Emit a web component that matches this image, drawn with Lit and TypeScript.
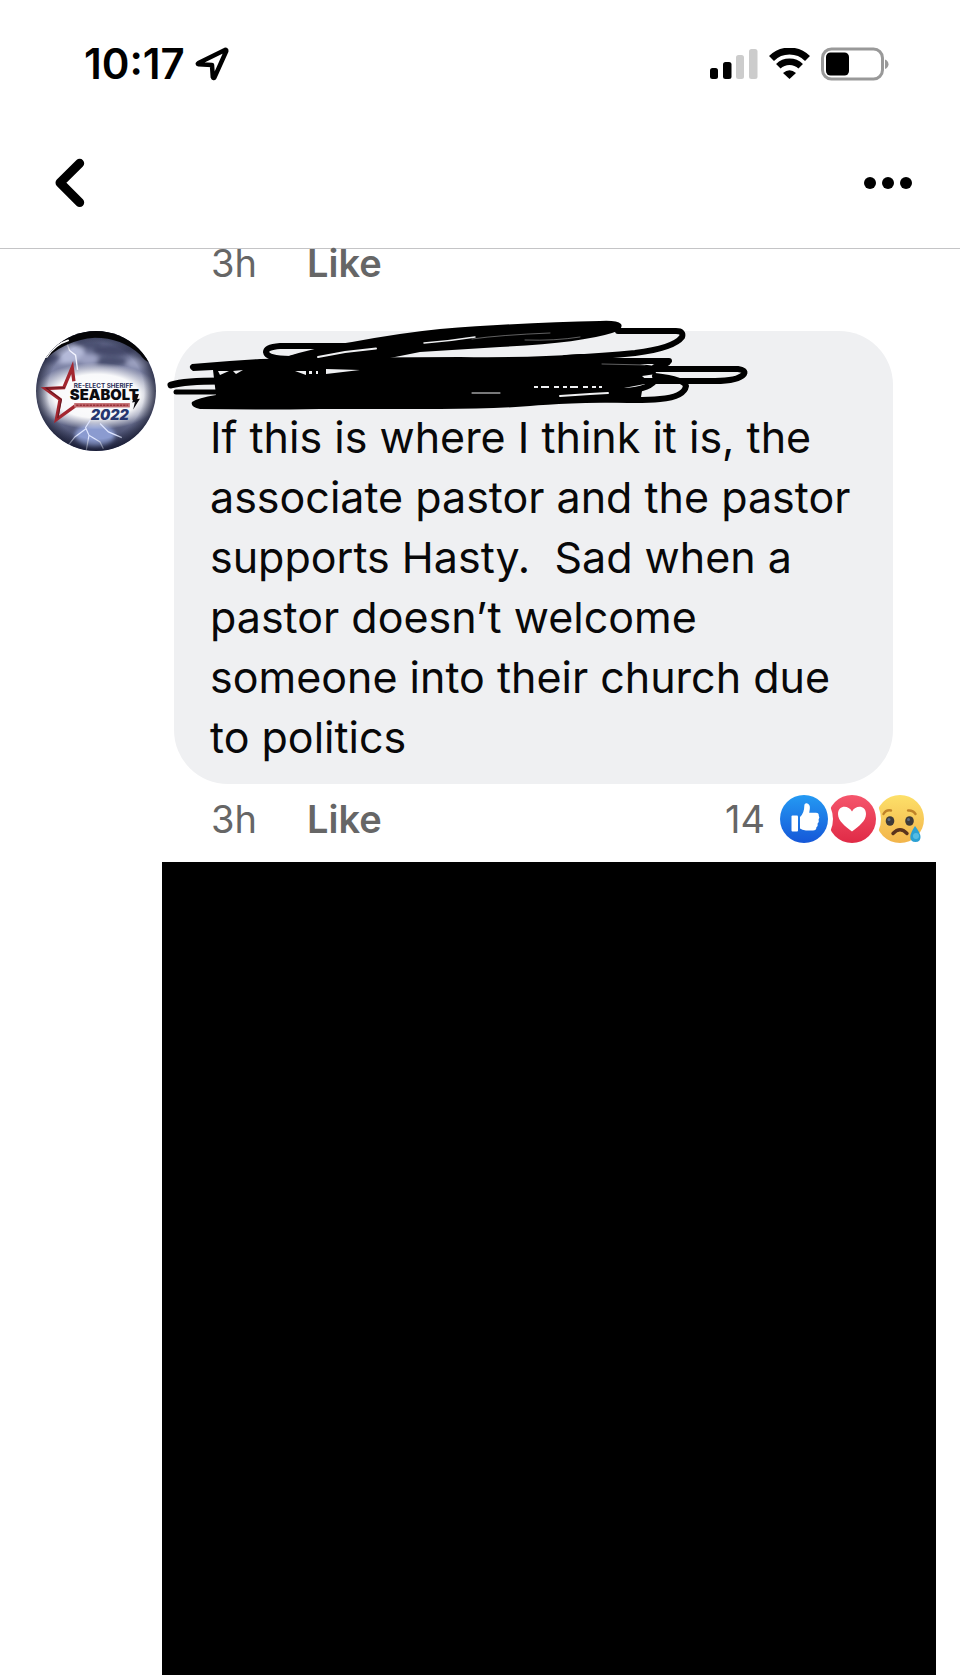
import { LitElement, html, css, svg } from "lit";
import { customElement, property } from "lit/decorators.js";

@customElement("status-bar")
class StatusBar extends LitElement {
  static styles = css`
    :host {
      display: flex;
      align-items: center;
      justify-content: space-between;
      padding: 40px 71px 30px 84px;
    }
    .clock {
      display: flex;
      align-items: center;
      gap: 10px;
      font-size: 42px;
      line-height: 48px;
      font-weight: 600;
    }
    .signals {
      display: flex;
      align-items: center;
      gap: 11px;
    }
    svg {
      display: block;
    }
  `;
  render() {
    return html`
      <div class="clock">
        <span>10:17</span>
        <svg width="34" height="34" viewBox="0 0 34 34" aria-hidden="true">
          <path d="M30 3 L3.500 16 Q2 17 3.500 17.300 L17 18 L17.800 30 Q18.500 32 19.500 30.300 L31.300 4 Q31.500 2.500 30 3Z"
            fill="none" stroke="#000" stroke-width="4.500" stroke-linejoin="round" />
        </svg>
      </div>
      <div class="signals">
        <svg width="48" height="32" viewBox="0 0 48 32" role="img" aria-label="Signal">
          <rect x="0" y="20" width="8" height="11" rx="2.5" />
          <rect x="13" y="14" width="8.5" height="17" rx="2.5" />
          <rect x="26" y="7" width="8" height="24" rx="2.5" fill="#ccc" />
          <rect x="39" y="1" width="8.5" height="30" rx="2.5" fill="#ccc" />
        </svg>
        <svg width="41" height="32" viewBox="0 0 41 32" role="img" aria-label="Wi-Fi">
          <path d="M2.5 10.5 A25.5 25.5 0 0 1 38.5 10.5" fill="none" stroke="#000" stroke-width="7" />
          <path d="M9.3 18.3 A16 16 0 0 1 31.7 18.3" fill="none" stroke="#000" stroke-width="6.4" />
          <path d="M20.5 31 L14 25 Q20.5 19.6 27 25Z" />
        </svg>
        <svg width="68" height="34" viewBox="0 0 68 34" role="img" aria-label="Battery">
          <rect x="1.5" y="2" width="60" height="30" rx="9" fill="none" stroke="#999" stroke-width="3" />
          <rect x="5" y="5.500" width="23" height="23" rx="4.500" />
          <path d="M64 12.5 Q67.5 14 67.5 17.2 Q67.5 20.5 64 22Z" fill="#999" />
        </svg>
      </div>
    `;
  }
}

@customElement("nav-bar")
class NavBar extends LitElement {
  static styles = css`
    :host {
      display: flex;
      align-items: center;
      justify-content: space-between;
      padding: 35px 43px;
      border-bottom: 1px solid #c4c4c6;
    }
    button {
      display: block;
      padding: 0;
      border: 0;
      background: none;
      cursor: pointer;
    }
    svg {
      display: block;
    }
  `;
  render() {
    return html`
      <button aria-label="Back">
        <svg width="60" height="60" viewBox="0 0 60 60">
          <path d="M36.7 10.3 L17 29.8 L36.7 49.5" fill="none" stroke="#000" stroke-width="9"
            stroke-linecap="round" stroke-linejoin="round" />
        </svg>
      </button>
      <button aria-label="More options">
        <svg width="60" height="60" viewBox="0 0 60 60">
          <circle cx="13" cy="30" r="6" /><circle cx="31" cy="30" r="6" /><circle cx="49" cy="30" r="6" />
        </svg>
      </button>
    `;
  }
}

const thumb = svg`
  <circle cx="24" cy="24" r="24" fill="url(#blue)" />
  <path d="M12.500 20.500h4.500q1 0 1 1v14q0 1-1 1h-4.500q-1 0-1-1v-14q0-1 1-1Z" fill="#fff" />
  <path d="M20 22 Q24.3 18 24.3 11 Q24.3 8 26.8 8.3 Q30.5 9.3 29.8 14 L29.2 17.8 H36 Q39 18 38.8 20.8 Q40 22.5 38.6 24.6 Q39.4 27 37.6 28.6 Q38.2 31 36.4 32.2 Q36.4 35.4 33 35.4 H26 Q22 35.4 20 33.6Z" fill="#fff" />`;
const heart = svg`
  <circle cx="24" cy="24" r="24" fill="url(#red)" />
  <circle cx="-24" cy="24" r="29" fill="#fff" />
  <path d="M24 36.500 C17 31 10 26 10 19 C10 10.500 20 9.500 24 16.500 C28 9.500 38 10.500 38 19 C38 26 31 31 24 36.500Z" fill="#fff" />`;
const sad = svg`
  <circle cx="24" cy="24" r="24" fill="url(#yellow)" />
  <circle cx="-24" cy="24" r="29" fill="#fff" />
  <path d="M7.500 19 Q10 14.500 15 15.500 M32 15.500 Q37 15 39.500 19" fill="none" stroke="#c08328" stroke-width="2.400" stroke-linecap="round" />
  <ellipse cx="14" cy="26" rx="4.300" ry="4.800" fill="#3e3a38" />
  <ellipse cx="33.500" cy="26" rx="4.300" ry="4.800" fill="#3e3a38" />
  <circle cx="13" cy="24.500" r="1.500" fill="#5d6a80" /><circle cx="32.500" cy="24.500" r="1.500" fill="#5d6a80" />
  <path d="M17 38.500 Q24 31 31 38.500" fill="none" stroke="#5a321c" stroke-width="3.400" stroke-linecap="round" />
  <path d="M39 31 Q44.500 38 44.500 42 Q44.500 47 39.500 47 Q34.300 47 34.300 42 Q34.300 38 39 31Z" fill="#2ba0d3" />
  <circle cx="40" cy="41" r="3" fill="#55bce4" />`;

@customElement("comment-actions")
class CommentActions extends LitElement {
  @property({ type: Number }) count = 0;
  static styles = css`
    :host {
      display: flex;
      align-items: center;
      justify-content: space-between;
      padding: 0 36px 0 211px;
      font-size: 38px;
      line-height: 48px;
      color: #666;
    }
    .left {
      display: flex;
      gap: 50px;
    }
    button {
      display: flex;
      align-items: center;
      gap: 15px;
      padding: 0;
      border: 0;
      background: none;
      font: inherit;
      color: inherit;
      cursor: pointer;
    }
    .like {
      font-weight: 600;
    }
    .icons {
      display: flex;
    }
    svg {
      display: block;
    }
  `;
  icon(name: string, content: unknown) {
    return html`<svg width="48" height="48" viewBox="0 0 48 48" role="img" aria-label=${name}>
      <defs>
        <linearGradient id="blue" x2="0" y2="1"><stop stop-color="#249af3" /><stop offset="1" stop-color="#1557d8" /></linearGradient>
        <linearGradient id="red" x2="0" y2="1"><stop stop-color="#f5566c" /><stop offset="1" stop-color="#e02a46" /></linearGradient>
        <linearGradient id="yellow" x2="0" y2="1"><stop stop-color="#fde069" /><stop offset="1" stop-color="#f2b44b" /></linearGradient>
      </defs>
      ${content}
    </svg>`;
  }
  render() {
    return html`
      <div class="left"><span>3h</span><button class="like">Like</button></div>
      ${this.count
        ? html`<button>
            <span>${this.count}</span>
            <span class="icons">${this.icon("Like", thumb)}${this.icon("Love", heart)}${this.icon("Sad", sad)}</span>
          </button>`
        : ""}
    `;
  }
}

@customElement("campaign-avatar")
class CampaignAvatar extends LitElement {
  static styles = css`
    :host,
    svg {
      display: block;
    }
    text {
      font-family: Inter, "Liberation Sans", sans-serif;
    }
    .small {
      font-size: 19px;
      font-weight: 700;
      fill: #2b2f58;
    }
    .name {
      font-size: 44px;
      font-weight: 900;
      fill: #0b0b10;
    }
    .year {
      font-size: 43px;
      font-weight: 900;
      font-style: italic;
      fill: #26366f;
    }
  `;
  render() {
    return html`<svg width="120" height="120" viewBox="34 34 358 358" role="img" aria-label="Profile picture">
      <defs>
        <clipPath id="disc"><circle cx="213" cy="213" r="179" /></clipPath>
        <linearGradient id="sky" x2="0" y2="1">
          <stop stop-color="#4a5072" /><stop offset=".3" stop-color="#7c82a4" />
          <stop offset=".7" stop-color="#767c9c" /><stop offset="1" stop-color="#252a4c" />
        </linearGradient>
        <radialGradient id="glow">
          <stop stop-color="#fff" /><stop offset=".65" stop-color="#fff" stop-opacity=".95" />
          <stop offset="1" stop-color="#fff" stop-opacity="0" />
        </radialGradient>
        <radialGradient id="edge">
          <stop offset=".8" stop-color="#15182c" stop-opacity="0" /><stop offset="1" stop-color="#15182c" stop-opacity=".7" />
        </radialGradient>
        <filter id="soft"><feGaussianBlur stdDeviation="7" /></filter>
      </defs>
      <g clip-path="url(#disc)">
        <rect x="34" y="34" width="358" height="358" fill="url(#sky)" />
        <g filter="url(#soft)">
          <ellipse cx="120" cy="100" rx="60" ry="32" fill="#b4b9d8" />
          <ellipse cx="80" cy="115" rx="28" ry="14" fill="#5c6288" />
          <ellipse cx="190" cy="74" rx="40" ry="10" fill="#4a4f70" />
          <ellipse cx="265" cy="92" rx="62" ry="16" fill="#454a6a" />
          <ellipse cx="255" cy="125" rx="50" ry="14" fill="#4a4f70" />
          <ellipse cx="190" cy="118" rx="30" ry="16" fill="#9ca1c2" />
          <ellipse cx="340" cy="130" rx="36" ry="16" fill="#9a9fbe" />
          <ellipse cx="210" cy="345" rx="60" ry="35" fill="#8b9bd0" />
        </g>
        <ellipse cx="215" cy="228" rx="196" ry="100" fill="url(#glow)" />
        <path d="M125 68 L134 92 L152 106 L158 150" fill="none" stroke="#f4f5ff" stroke-width="4" />
        <path d="M196 300 L182 322 L192 345 L184 390 M184 325 L150 350 L130 375 M192 345 L225 365 L235 385 M225 310 L250 335 L290 352" fill="none" stroke="#dfe6ff" stroke-width="3.500" />
        <circle cx="213" cy="213" r="179" fill="url(#edge)" />
        <path d="M48 132 Q95 30 213 30 Q335 30 380 132 Q355 122 345 105 Q290 54 210 54 Q115 60 48 132Z" fill="#050507" />
        <path d="M66 112 Q90 74 130 62" fill="none" stroke="#fff" stroke-width="5" stroke-linecap="round" />
      </g>
      <path d="M147 184 L142 143 L117 203 L62 206 L106 238 L95 298 L150 258" fill="none" stroke="#a3262f" stroke-width="10" />
      <path d="M120 203 L64 204 L110 239 L99 294" fill="none" stroke="#641720" stroke-width="3" />
      <text class="small" x="147" y="203">RE-ELECT SHERIFF</text>
      <text class="name" x="135" y="241">SEABOLT</text>
      <path d="M329 222 L341 222 L336 237 L344 236 L324 268 L329 246 L321 247Z" fill="#0b0b10" />
      <rect x="148" y="249" width="166" height="13" fill="#c26c70" />
      <path d="M154 255.500H308" stroke="#973038" stroke-width="5" stroke-dasharray="7 3" />
      <text class="year" x="197" y="300">2022</text>
    </svg>`;
  }
}

@customElement("comment-card")
class CommentCard extends LitElement {
  static styles = css`
    :host {
      display: flex;
      align-items: flex-start;
      gap: 18px;
      padding: 0 67px 0 36px;
    }
    campaign-avatar {
      flex: none;
    }
    .bubble {
      flex: 1;
      min-width: 0;
      position: relative;
      padding: 76px 30px 17px 36px;
      border-radius: 54px;
      background: #eff0f2;
      font-size: 43px;
      line-height: 60px;
      color: #080809;
    }
    p {
      margin: 0;
      white-space: pre-wrap;
    }
    .scribble {
      position: absolute;
      left: -14px;
      top: -21px;
    }
  `;
  render() {
    return html`
      <campaign-avatar></campaign-avatar>
      <div class="bubble">
        <svg class="scribble" width="620" height="110" viewBox="160 310 620 110" role="img" aria-label="Name crossed out">
          <path d="M192 364 Q225 361 260 359 Q380 357 460 357 Q530 358 580 354 L604 354 L600 359 L625 362 L655 366 L656 374 L642 376 L650 383 L624 388 L642 391 L641 397 L636 402 Q560 403 530 406 Q490 409 440 409 L320 409 Q260 410 200 409 Q190 407 192 402 Q198 398 216 395 L213 370 L193 371 Q187 367 192 364Z" />
          <path d="M282 358 Q320 346 352 342 Q400 333 440 329 Q530 322 600 321 Q617 320 621 324 Q624 329 612 333 Q580 343 500 347 L420 352 L380 360 L282 360Z" />
          <g fill="none" stroke="#000" stroke-width="6" stroke-linecap="round" stroke-linejoin="round">
            <path d="M382 346 L280 346 Q266 347 266 352 Q267 359 290 359 Q305 356 324 351" />
            <path d="M618 331 H676 Q684 331 682 337 Q674 348 635 353 Q605 356 565 358" />
            <path d="M590 361 H650 L669 361 Q667 365 655 367" />
            <path d="M630 369 H738 Q746 370 744 374 Q738 381 715 381 H610" />
            <path d="M655 376 Q684 379 686 386 Q684 397 660 399 Q640 401 600 399" />
            <path d="M656 379 Q651 389 625 391 L560 395" />
            <path stroke-width="7" d="M171 385 Q185 381 220 381" />
            <path stroke-width="5" d="M176 392 H222" />
          </g>
          <g fill="none" stroke="#eff0f2" stroke-linecap="round">
            <path stroke-width="2" d="M318 357 L345 352 L376 348.500" />
            <path stroke-width="1.500" d="M424 343 Q450 341 475 337" />
            <path stroke-width="1" stroke-opacity=".4" d="M472 339 Q500 335 550 333 M525 340 Q555 341 580 337 M602 364 L645 365" />
            <path stroke-width="1" d="M472 393 L500 393" />
            <path stroke-width="2" d="M560 396 L590 394 L608 393" />
          </g>
          <path fill="#eff0f2" d="M218 371 L229 371 L220 375Z M233 371 L243 370 L236 374Z M295 371 H306 V375Z M309 371 H312 V374 H309Z M316 371 H318 V374 H316Z M326 369 L360 370 L326 374Z" />
          <path stroke="#eff0f2" stroke-width="2" stroke-dasharray="4 3 8 5 5 4" d="M534 387 H602" />
        </svg>
        <p>If this is where I think it is, the associate pastor and the pastor supports Hasty.  Sad when a pastor doesn’t welcome someone into their church due to politics</p>
      </div>
    `;
  }
}

@customElement("app-root")
class AppRoot extends LitElement {
  static styles = css`
    :host {
      display: flex;
      flex-direction: column;
      min-height: 100vh;
      background: #fff;
      color: #000;
      font-family: Inter, "Liberation Sans", sans-serif;
    }
    main {
      flex: 1;
      display: flex;
      flex-direction: column;
    }
    .previous {
      margin-top: -10px;
      margin-bottom: 44px;
    }
    .current {
      margin: 11px 0 19px;
    }
    .blackout {
      flex: 1;
      margin: 0 24px 0 162px;
      background: #000;
    }
  `;
  render() {
    return html`
      <header><status-bar></status-bar><nav-bar></nav-bar></header>
      <main>
        <comment-actions class="previous"></comment-actions>
        <comment-card></comment-card>
        <comment-actions class="current" .count=${14}></comment-actions>
        <div class="blackout"></div>
      </main>
    `;
  }
}
